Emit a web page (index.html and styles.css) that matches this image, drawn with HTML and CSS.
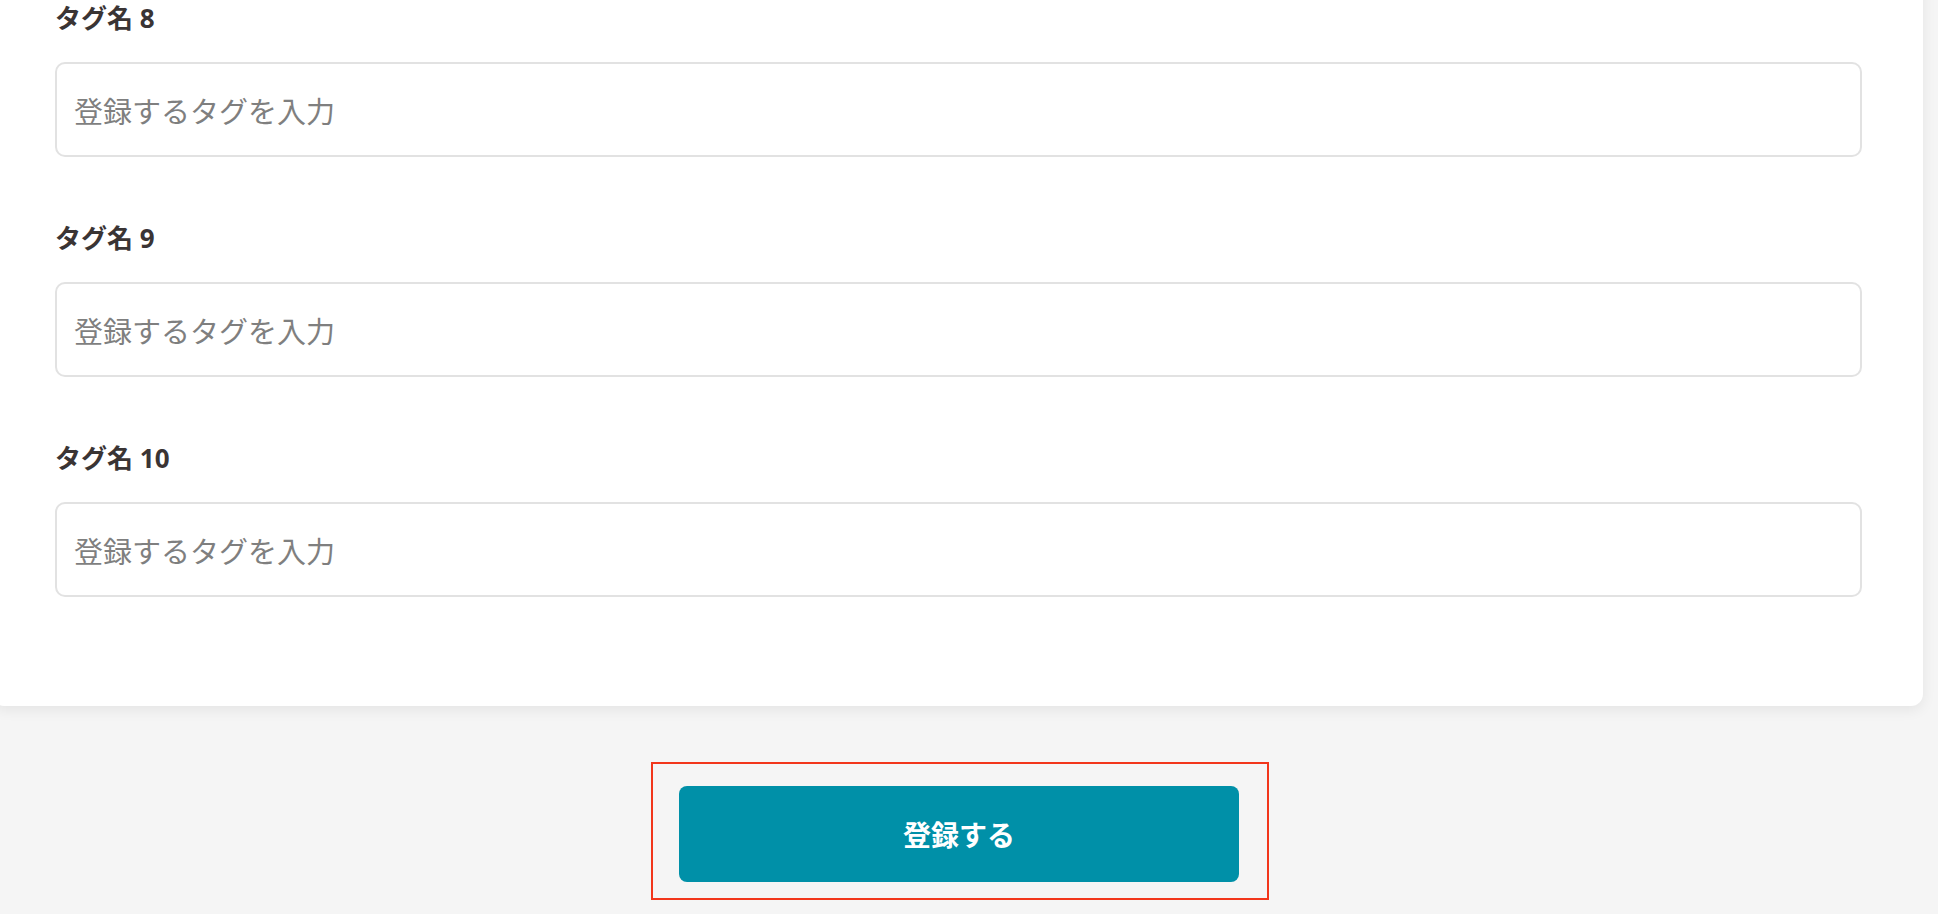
FILE: index.html
```html
<!DOCTYPE html>
<html lang="ja">
<head>
<meta charset="utf-8">
<title>タグ登録</title>
<link rel="stylesheet" href="styles.css">
</head>
<body>
<div class="page">
  <form class="card">
    <div class="field">
      <label class="field-label" for="tag8">タグ名 8</label>
      <input class="field-input" id="tag8" type="text" placeholder="登録するタグを入力">
    </div>
    <div class="field">
      <label class="field-label" for="tag9">タグ名 9</label>
      <input class="field-input" id="tag9" type="text" placeholder="登録するタグを入力">
    </div>
    <div class="field">
      <label class="field-label" for="tag10">タグ名 10</label>
      <input class="field-input" id="tag10" type="text" placeholder="登録するタグを入力">
    </div>
  </form>
  <div class="actions">
    <div class="highlight">
      <button class="submit" type="button">登録する</button>
    </div>
  </div>
</div>
</body>
</html>
```

FILE: styles.css
```css
html, body {
  margin: 0;
  padding: 0;
}
body {
  background: #f5f5f5;
  font-family: "Noto Sans", "Noto Sans CJK JP", sans-serif;
  color: #3a3434;
  overflow: hidden;
}
.page {
  width: 1931px;
  margin-left: -8px;
}
.card {
  background: #ffffff;
  margin-top: -40px;
  padding: 45px 61px 109px 63px;
  border-radius: 12px;
  box-shadow: 0 4px 14px rgba(0, 0, 0, 0.07);
  display: flex;
  flex-direction: column;
  gap: 68px;
}
.field {
  display: flex;
  flex-direction: column;
}
.field-label {
  font-family: "Noto Sans", "Noto Sans CJK JP", sans-serif;
  font-size: 26px;
  line-height: 26px;
  font-weight: 700;
  color: #3a3434;
  margin-bottom: 31px;
}
.field-input {
  box-sizing: border-box;
  height: 95px;
  width: 100%;
  border: 2px solid #e2e2e2;
  border-radius: 10px;
  padding: 0 17px;
  font-family: "Noto Sans CJK JP", "Noto Sans", sans-serif;
  font-size: 29px;
  color: #333;
  background: #fff;
  outline: none;
}
.field-input::placeholder {
  color: #7f7f7f;
}
.actions {
  display: flex;
  justify-content: center;
  padding-top: 56px;
  padding-left: 5px;
}
.highlight {
  border: 2px solid #f2361b;
  padding: 22px 28px 16px 26px;
}
.submit {
  display: block;
  width: 560px;
  height: 96px;
  border: none;
  border-radius: 8px;
  background: #0090a8;
  color: #ffffff;
  font-family: "Noto Sans CJK JP", "Noto Sans", sans-serif;
  font-size: 28px;
  font-weight: 700;
  cursor: pointer;
}
```
